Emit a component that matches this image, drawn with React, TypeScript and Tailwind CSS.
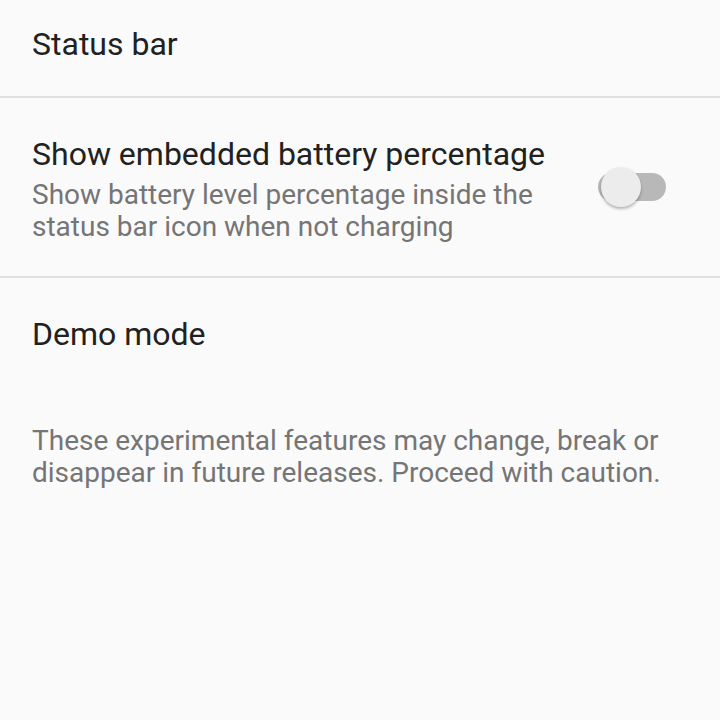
import React from 'react';

// ─── Switch (off state) ──────────────────────────────────────────────────────

function OffSwitch() {
    return (
        <div className="relative w-[68px] h-[40px] shrink-0">
            <div className="absolute left-0 right-0 top-[6px] h-[28px] rounded-full bg-[#b8b8b8]" />
            <div className="absolute left-[3px] top-0 w-[40px] h-[40px] rounded-full bg-[#ececec] shadow-[0_2px_3px_rgba(0,0,0,0.28)]" />
        </div>
    );
}

export default function App() {
    return (
        <div
            className="w-[720px] h-[720px] bg-[#fafafa] overflow-hidden"
            style={{ fontFamily: 'Roboto, "Noto Sans", sans-serif' }}
        >
            {/* Status bar */}
            <div className="h-[96px] px-[32px] pt-[25px]">
                <div className="text-[32px] leading-[38px] text-[#212121]">Status bar</div>
            </div>
            <div className="h-[2px] bg-[#e0e0e0]" />

            {/* Embedded battery percentage */}
            <div className="h-[178px] flex items-start pl-[32px] pr-[54px] pt-[37px]">
                <div className="flex-1 flex flex-col">
                    <div className="text-[32px] leading-[38px] text-[#212121]">
                        Show embedded battery percentage
                    </div>
                    <div className="mt-[6px] text-[28px] leading-[32px] text-[#757575]">
                        Show battery level percentage inside the
                        <br />
                        status bar icon when not charging
                    </div>
                </div>
                <div className="mt-[32px]">
                    <OffSwitch />
                </div>
            </div>
            <div className="h-[2px] bg-[#e0e0e0]" />

            {/* Demo mode */}
            <div className="px-[32px] pt-[37px]">
                <div className="text-[32px] leading-[38px] text-[#212121]">Demo mode</div>
            </div>

            {/* Footer */}
            <div className="px-[32px] mt-[72px] text-[28px] leading-[32px] text-[#757575]">
                These experimental features may change, break or
                <br />
                disappear in future releases. Proceed with caution.
            </div>
        </div>
    );
}
